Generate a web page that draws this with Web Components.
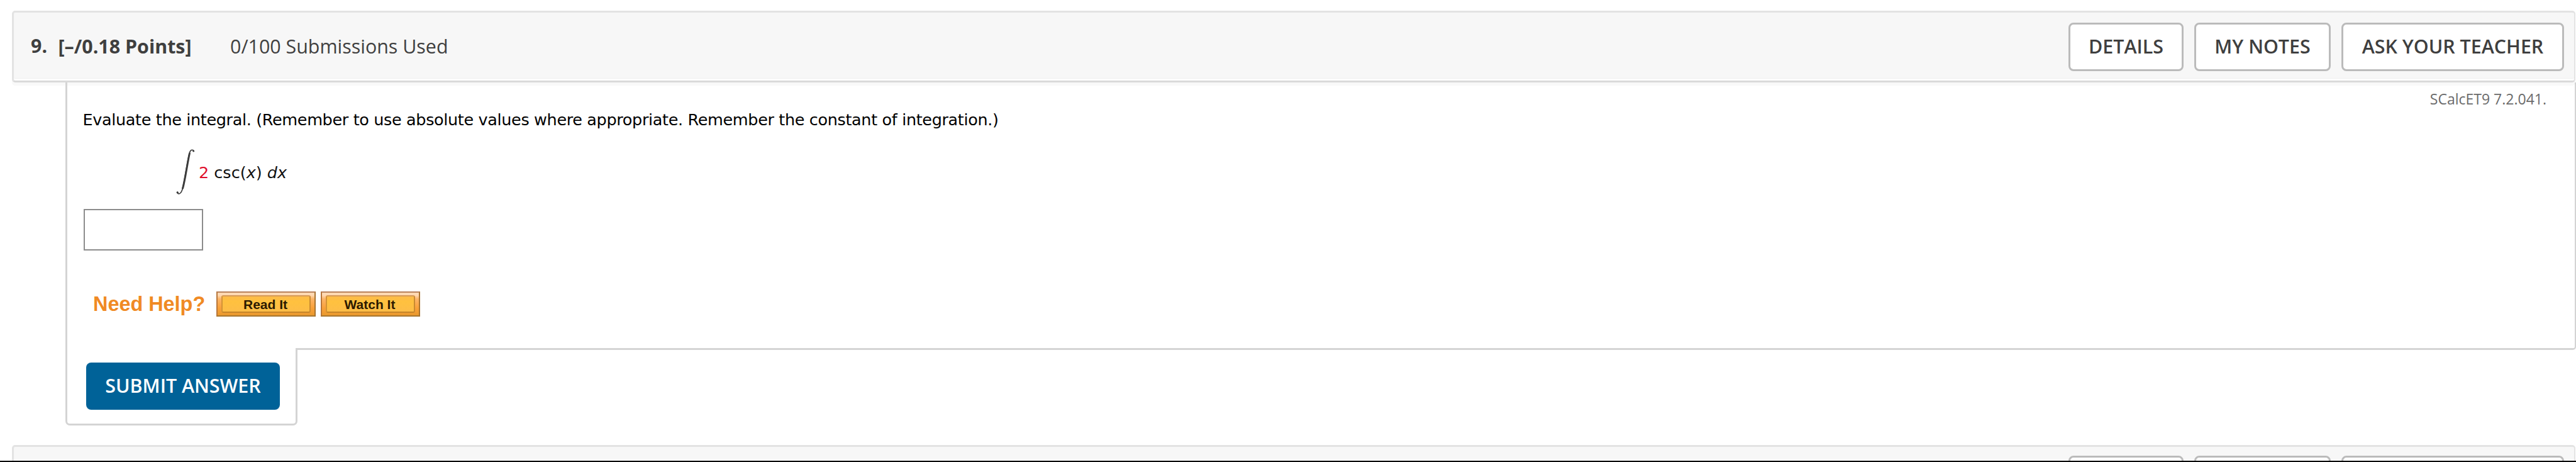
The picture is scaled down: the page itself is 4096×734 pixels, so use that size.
<!DOCTYPE html>
<html lang="en">
<head>
<meta charset="utf-8">
<title>Homework</title>
<style>
  body {
    margin: 0;
    height: 734px;
    overflow: hidden;
    background: #fff;
    font-family: "Open Sans", sans-serif;
  }
</style>
</head>
<body>
<assignment-page></assignment-page>

<script>
class OutlineButton extends HTMLElement {
  constructor() {
    super();
    this.attachShadow({ mode: "open" });
  }

  static get styles() {
    return /* css */`
      :host {
        display: flex;
        justify-content: center;
        align-items: center;
        box-sizing: border-box;
        height: 77px;
        border: 3px solid #bbb;
        border-radius: 8px;
        background: #fff;
        color: #3f3f3f;
        font-size: 30.4px;
        font-weight: 600;
        line-height: 42px;
        white-space: nowrap;
      }
    `;
  }

  connectedCallback() {
    this.style.width = `${this.getAttribute("width")}px`;
    this.shadowRoot.innerHTML = /* html */`
    <style>${OutlineButton.styles}</style>
    <slot></slot>`;
  }
}

class QuestionHeader extends HTMLElement {
  constructor() {
    super();
    this.attachShadow({ mode: "open" });
  }

  static get styles() {
    return /* css */`
      :host {
        display: flex;
        justify-content: space-between;
        align-items: center;
        box-sizing: border-box;
        height: 114px;
        margin: 0 1px 0 19px;
        padding: 0 16px 0 27px;
        border: 3px solid #e3e3e3;
        border-right-width: 2px;
        border-bottom-color: #dadada;
        border-radius: 5px;
        background: #f7f7f7;
        box-shadow: inset 0 -3px #fdfdfd, inset 0 -4px #f1f1f1, 0 5px #f9f9f9;
        color: #3f3f3f;
        font-size: 30.4px;
        line-height: 42px;
      }

      .info, .actions {
        display: flex;
        align-items: center;
      }

      .actions {
        gap: 17px;
      }

      .number, .points {
        display: block;
        font-weight: 700;
      }

      .number {
        width: 43.5px;
        padding-bottom: 2px;
      }

      .points {
        margin-right: 61.5px;
      }
    `;
  }

  connectedCallback() {
    this.shadowRoot.innerHTML = /* html */`
    <style>${QuestionHeader.styles}</style>
    <div class="info">
      <slot name="number" class="number"></slot>
      <slot name="points" class="points"></slot>
      <slot name="used"></slot>
    </div>
    <div class="actions"><slot></slot></div>`;
  }
}

class IntegralExpression extends HTMLElement {
  constructor() {
    super();
    this.attachShadow({ mode: "open" });
  }

  static get styles() {
    return /* css */`
      :host {
        display: flex;
        align-items: center;
        height: 76px;
        color: #111;
        font: 25.5px/32px "DejaVu Sans", sans-serif;
        white-space: pre;
      }

      svg {
        width: 36px;
        height: 76px;
      }
    `;
  }

  connectedCallback() {
    this.shadowRoot.innerHTML = /* html */`
    <style>${IntegralExpression.styles}</style>
    <svg viewBox="0 0 36 76" fill="none" stroke="#3c3c3c" stroke-linecap="round">
      <path d="M28.3 4.2C27.3 1.6 23.6 1.2 21.8 5.6C18.4 15 13.4 54 9.6 66C7.8 71.4 4.2 73.6 1.8 70" stroke-width="1.7"/>
      <path d="M21.4 8C18.6 19 14.2 51 10.6 63" stroke-width="3"/>
      <circle cx="27.6" cy="4" r="1" fill="#3c3c3c"/>
      <circle cx="2.2" cy="69.8" r="1.2" fill="#3c3c3c"/>
    </svg>
    <div><slot></slot></div>`;
  }
}

class HelpButton extends HTMLElement {
  constructor() {
    super();
    this.attachShadow({ mode: "open" });
  }

  static get styles() {
    return /* css */`
      :host {
        display: block;
        box-sizing: border-box;
        width: 158px;
        height: 40px;
        padding: 4px 6px;
        border: 2px solid;
        border-color: #b9825c #a87330 #a8762f #b8763a;
        background:
          linear-gradient(#ffd9b3 0 4px, #fcb467 10px, #f9a13a 24px, #e9992e);
      }

      .face {
        display: flex;
        justify-content: center;
        align-items: center;
        box-sizing: border-box;
        height: 28px;
        padding: 2px 2px 0 0;
        border: 2px solid;
        border-color: #d59a58 #c98a30 #c4852a #d39336;
        border-radius: 3px;
        background: linear-gradient(#fdbb48, #ffc13f 35%, #fdbd48);
        color: #2c1a00;
        font: bold 21px/24px "Liberation Sans", Arial, sans-serif;
      }
    `;
  }

  connectedCallback() {
    this.shadowRoot.innerHTML = /* html */`
    <style>${HelpButton.styles}</style>
    <div class="face"><slot></slot></div>`;
  }
}

class NeedHelp extends HTMLElement {
  constructor() {
    super();
    this.attachShadow({ mode: "open" });
  }

  static get styles() {
    return /* css */`
      :host {
        display: flex;
        align-items: center;
        height: 40px;
        gap: 8px;
      }

      .label {
        width: 188px;
        color: #f08a24;
        font: bold 32.4px/40px "Liberation Sans", Arial, sans-serif;
        white-space: nowrap;
      }
    `;
  }

  connectedCallback() {
    this.shadowRoot.innerHTML = /* html */`
    <style>${NeedHelp.styles}</style>
    <div class="label">Need Help?</div>
    <slot></slot>`;
  }
}

class QuestionPanel extends HTMLElement {
  constructor() {
    super();
    this.attachShadow({ mode: "open" });
  }

  static get styles() {
    return /* css */`
      :host {
        display: block;
      }

      .body {
        box-sizing: border-box;
        height: 425px;
        margin-left: 104px;
        padding: 0 45px 0 26px;
        border: 3px solid #d4d4d4;
        border-top: 0;
        border-right-width: 2px;
        border-bottom-right-radius: 5px;
      }

      .top {
        display: flex;
        justify-content: space-between;
        height: 105px;
      }

      .prompt {
        margin: 43px 0 0 -1.5px;
        color: #000;
        font: 25.5px/32px "DejaVu Sans", sans-serif;
        letter-spacing: -0.36px;
        white-space: nowrap;
      }

      .code {
        margin-top: 11px;
        color: #6b6b6b;
        font-size: 23px;
        line-height: 30px;
      }

      .math {
        margin-left: 147px;
      }

      input {
        display: block;
        box-sizing: border-box;
        width: 190px;
        height: 66px;
        margin: 20px 0 65px;
        padding: 0;
        border: 2px solid #8c8c8c;
        border-radius: 0;
        background: #fff;
      }

      .help {
        margin-left: 15px;
      }

      /* the tab hides the stretch of the panel's bottom border above it */
      .tab {
        position: relative;
        box-sizing: border-box;
        width: 369px;
        height: 123px;
        margin: -3px 0 0 104px;
        padding: 23px 0 0 30px;
        border: 3px solid #d4d4d4;
        border-top: 0;
        border-radius: 0 0 7px 7px;
        background: #fff;
      }

      .submit {
        display: block;
        box-sizing: border-box;
        width: 308px;
        height: 75px;
        padding: 0 0 1px;
        border: 0;
        border-radius: 8px;
        background: #006298;
        color: #fff;
        font: 600 30.4px/42px "Open Sans", sans-serif;
      }
    `;
  }

  connectedCallback() {
    this.shadowRoot.innerHTML = /* html */`
    <style>${QuestionPanel.styles}</style>
    <div class="body">
      <div class="top">
        <div class="prompt"><slot name="prompt"></slot></div>
        <div class="code"><slot name="code"></slot></div>
      </div>
      <div class="math"><slot name="math"></slot></div>
      <input type="text" aria-label="Answer">
      <div class="help"><slot name="help"></slot></div>
    </div>
    <div class="tab"><button class="submit">SUBMIT ANSWER</button></div>`;
  }
}

class AssignmentPage extends HTMLElement {
  constructor() {
    super();
    this.attachShadow({ mode: "open" });
  }

  static get styles() {
    return /* css */`
      :host {
        display: flex;
        flex-direction: column;
        box-sizing: border-box;
        height: 734px;
        overflow: hidden;
      }

      .page {
        flex: 1;
        min-height: 0;
        padding-top: 17px;
        overflow: hidden;
      }

      .edge {
        height: 2px;
        background: #000;
      }

      .next {
        height: 111px;
        margin-top: 31px;
      }

      .red {
        color: #e0102c;
      }
    `;
  }

  connectedCallback() {
    this.shadowRoot.innerHTML = /* html */`
    <style>${AssignmentPage.styles}</style>
    <div class="page">
      <question-header>
        <span slot="number">9.</span>
        <span slot="points">[–/0.18 Points]</span>
        <span slot="used">0/100 Submissions Used</span>
        <outline-button width="183">DETAILS</outline-button>
        <outline-button width="217">MY NOTES</outline-button>
        <outline-button width="354">ASK YOUR TEACHER</outline-button>
      </question-header>
      <question-panel>
        <span slot="prompt">Evaluate the integral. (Remember to use absolute values where appropriate. Remember the constant of integration.)</span>
        <span slot="code">SCalcET9 7.2.041.</span>
        <integral-expression slot="math"><span class="red">2</span> csc(<i>x</i>) <i>dx</i></integral-expression>
        <need-help slot="help">
          <help-button>Read It</help-button>
          <help-button>Watch It</help-button>
        </need-help>
      </question-panel>
      <question-header class="next">
        <outline-button width="183"></outline-button>
        <outline-button width="217"></outline-button>
        <outline-button width="354"></outline-button>
      </question-header>
    </div>
    <div class="edge"></div>`;
  }
}

customElements.define("outline-button", OutlineButton);
customElements.define("question-header", QuestionHeader);
customElements.define("integral-expression", IntegralExpression);
customElements.define("help-button", HelpButton);
customElements.define("need-help", NeedHelp);
customElements.define("question-panel", QuestionPanel);
customElements.define("assignment-page", AssignmentPage);
</script>
</body>
</html>
